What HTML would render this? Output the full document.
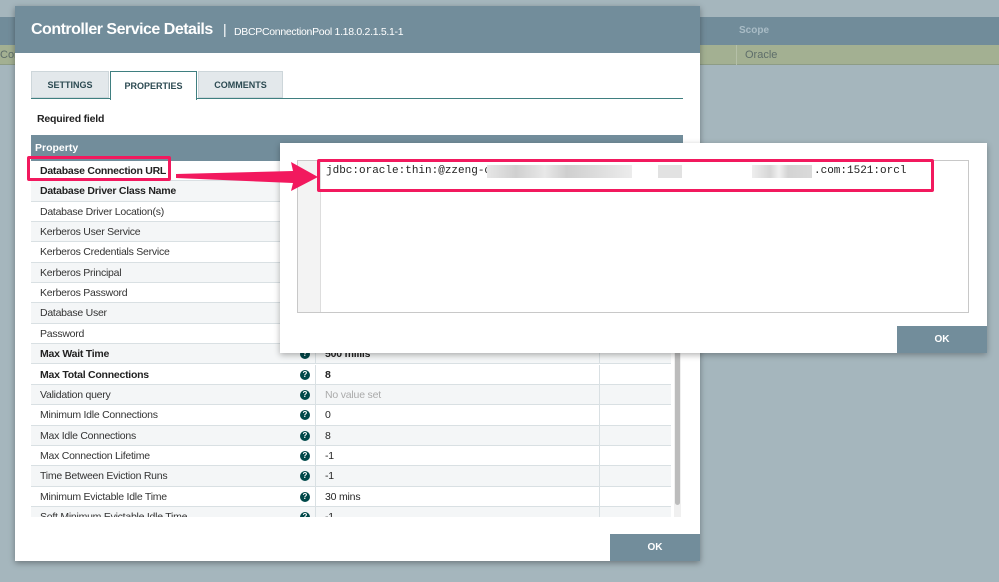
<!DOCTYPE html>
<html><head><meta charset="utf-8"><style>
*{margin:0;padding:0;box-sizing:border-box}
body{width:999px;height:582px;background:#a5b6bd;font-family:"Liberation Sans",sans-serif;position:relative;overflow:hidden;font-size:11px;color:#262626}
.a{position:absolute}
.row{position:absolute;left:31px;width:640px;height:20.35px;border-bottom:1px solid #d9e0e3}
.row .n{position:absolute;left:9px;top:4px;font-size:10.5px;letter-spacing:-0.25px;color:#333;white-space:nowrap}
.row .q{position:absolute;left:269px;top:5px;width:10px;height:10px;border-radius:50%;background:#004849;color:#fff;font-size:8px;font-weight:bold;text-align:center;line-height:10px}
.row .v{position:absolute;left:294px;top:4px;font-size:10.5px;letter-spacing:-0.2px}
.row .c1{position:absolute;left:284px;top:0;bottom:0;border-left:1px solid #d9e0e3}
.row .c2{position:absolute;left:568px;top:0;bottom:0;border-left:1px solid #d9e0e3}
.b{font-weight:bold;color:#222!important}
.btn{position:absolute;background:#728d9b;color:#fff;font-size:10px;font-weight:bold;text-align:center}
</style></head><body>
<div class="a" style="left:0;top:17px;width:999px;height:28px;background:#718c9a"></div>
<div class="a" style="left:739px;top:25px;color:#a9bcc6;font-weight:bold;font-size:10px">Scope</div>
<div class="a" style="left:0;top:45px;width:999px;height:20px;background:#a3b092;border-bottom:1px solid #8d9c85"></div>
<div class="a" style="left:736px;top:45px;height:20px;border-left:1px solid #b5c0a8"></div>
<div class="a" style="left:745px;top:49px;color:#5e6e6a;font-size:11px">Oracle</div>
<div class="a" style="left:0;top:49px;color:#5e6e6a;font-size:11px">Conn</div>

<div class="a" style="left:15px;top:6px;width:685px;height:555px;background:#fff;box-shadow:0 2px 6px rgba(0,0,0,.35)"></div>
<div class="a" style="left:15px;top:6px;width:685px;height:47px;background:#728d9b"></div>
<div class="a" style="left:31px;top:21px;color:#fff;font-weight:bold;font-size:16px;letter-spacing:-0.5px;white-space:nowrap">Controller Service Details</div>
<div class="a" style="left:223px;top:21px;color:#fff;font-size:14px">|</div>
<div class="a" style="left:234px;top:26px;color:#fff;font-size:10.5px;letter-spacing:-0.3px;white-space:nowrap">DBCPConnectionPool 1.18.0.2.1.5.1-1</div>

<div class="a" style="left:31px;top:71px;width:78px;height:27px;background:#e3e8eb;border:1px solid #cdd6da;color:#2c4a52;font-weight:bold;font-size:9px;text-align:center;line-height:26px">SETTINGS</div>
<div class="a" style="left:110px;top:71px;width:87px;height:29px;background:#fff;border:1px solid #3f7f80;border-bottom:none;color:#2c4a52;font-weight:bold;font-size:9px;text-align:center;line-height:28px">PROPERTIES</div>
<div class="a" style="left:198px;top:71px;width:85px;height:27px;background:#e3e8eb;border:1px solid #cdd6da;color:#2c4a52;font-weight:bold;font-size:9px;text-align:center;line-height:26px">COMMENTS</div>
<div class="a" style="left:31px;top:98px;width:79px;height:1px;background:#3f7f80"></div>
<div class="a" style="left:197px;top:98px;width:486px;height:1px;background:#3f7f80"></div>
<div class="a" style="left:37px;top:113px;font-weight:bold;font-size:10.5px;letter-spacing:-0.2px;color:#222">Required field</div>

<div class="a" style="left:31px;top:135px;width:652px;height:26px;background:#728d9b"></div>
<div class="a" style="left:35px;top:142px;color:#fff;font-weight:bold;font-size:10.5px">Property</div>
<div class="a" style="left:31px;top:161px;width:652px;height:356px;overflow:hidden">
<div style="position:relative;left:-31px;top:-161px">
<div class="row" style="top:161px;background:#fff"><span class="n b">Database Connection URL</span><span class="q">?</span><span class="c1"></span><span class="c2"></span></div>
<div class="row" style="top:181.35px;background:#f4f6f7"><span class="n b">Database Driver Class Name</span><span class="q">?</span><span class="c1"></span><span class="c2"></span></div>
<div class="row" style="top:201.7px;background:#fff"><span class="n">Database Driver Location(s)</span><span class="q">?</span><span class="c1"></span><span class="c2"></span></div>
<div class="row" style="top:222.05px;background:#f4f6f7"><span class="n">Kerberos User Service</span><span class="q">?</span><span class="c1"></span><span class="c2"></span></div>
<div class="row" style="top:242.4px;background:#fff"><span class="n">Kerberos Credentials Service</span><span class="q">?</span><span class="c1"></span><span class="c2"></span></div>
<div class="row" style="top:262.75px;background:#f4f6f7"><span class="n">Kerberos Principal</span><span class="q">?</span><span class="c1"></span><span class="c2"></span></div>
<div class="row" style="top:283.1px;background:#fff"><span class="n">Kerberos Password</span><span class="q">?</span><span class="c1"></span><span class="c2"></span></div>
<div class="row" style="top:303.45px;background:#f4f6f7"><span class="n">Database User</span><span class="q">?</span><span class="c1"></span><span class="c2"></span></div>
<div class="row" style="top:323.8px;background:#fff"><span class="n">Password</span><span class="q">?</span><span class="c1"></span><span class="c2"></span></div>
<div class="row" style="top:344.15px;background:#f4f6f7"><span class="n b">Max Wait Time</span><span class="q">?</span><span class="c1"></span><span class="v b">500 millis</span><span class="c2"></span></div>
<div class="row" style="top:364.5px;background:#fff"><span class="n b">Max Total Connections</span><span class="q">?</span><span class="c1"></span><span class="v b">8</span><span class="c2"></span></div>
<div class="row" style="top:384.85px;background:#f4f6f7"><span class="n">Validation query</span><span class="q">?</span><span class="c1"></span><span class="v" style="color:#aaa">No value set</span><span class="c2"></span></div>
<div class="row" style="top:405.2px;background:#fff"><span class="n">Minimum Idle Connections</span><span class="q">?</span><span class="c1"></span><span class="v">0</span><span class="c2"></span></div>
<div class="row" style="top:425.55px;background:#f4f6f7"><span class="n">Max Idle Connections</span><span class="q">?</span><span class="c1"></span><span class="v">8</span><span class="c2"></span></div>
<div class="row" style="top:445.9px;background:#fff"><span class="n">Max Connection Lifetime</span><span class="q">?</span><span class="c1"></span><span class="v">-1</span><span class="c2"></span></div>
<div class="row" style="top:466.25px;background:#f4f6f7"><span class="n">Time Between Eviction Runs</span><span class="q">?</span><span class="c1"></span><span class="v">-1</span><span class="c2"></span></div>
<div class="row" style="top:486.6px;background:#fff"><span class="n">Minimum Evictable Idle Time</span><span class="q">?</span><span class="c1"></span><span class="v">30 mins</span><span class="c2"></span></div>
<div class="row" style="top:506.95px;background:#f4f6f7"><span class="n">Soft Minimum Evictable Idle Time</span><span class="q">?</span><span class="c1"></span><span class="v">-1</span><span class="c2"></span></div>
</div></div>
<div class="a" style="left:674px;top:161px;width:7px;height:356px;background:#f0f0f0"></div>
<div class="a" style="left:675px;top:340px;width:5px;height:165px;background:#bcbcbc;border-radius:3px"></div>
<div class="btn" style="left:610px;top:534px;width:90px;height:27px;line-height:27px">OK</div>

<div class="a" style="left:280px;top:143px;width:707px;height:210px;background:#fff;box-shadow:0 2px 6px rgba(0,0,0,.3)"></div>
<div class="a" style="left:297px;top:160px;width:672px;height:153px;border:1px solid #c8c8c8;background:#fff"></div>
<div class="a" style="left:298px;top:161px;width:23px;height:151px;background:#f3f3f3;border-right:1px solid #ddd"></div>
<div class="a" style="left:326px;top:165px;font-family:'Liberation Mono',monospace;font-size:11px;color:#222">jdbc:oracle:thin:@zzeng-c</div>
<div class="a" style="left:487px;top:165px;width:145px;height:13px;background:linear-gradient(90deg,#e6e6e6,#d0d0d0 20%,#e8e8e8 40%,#cfcfcf 55%,#dcdcdc 75%,#ececec)"></div>
<div class="a" style="left:658px;top:165px;width:24px;height:13px;background:#e2e2e2"></div>
<div class="a" style="left:752px;top:165px;width:60px;height:13px;background:linear-gradient(90deg,#eee,#d6d6d6 30%,#f0f0f0 45%,#d3d3d3 60%,#dadada)"></div>
<div class="a" style="left:814px;top:165px;font-family:'Liberation Mono',monospace;font-size:11px;color:#222">.com:1521:orcl</div>
<div class="btn" style="left:897px;top:326px;width:90px;height:27px;line-height:27px">OK</div>

<div class="a" style="left:27px;top:156px;width:144px;height:25px;border:3px solid #f2195e;border-radius:2px"></div>
<div class="a" style="left:317px;top:159px;width:617px;height:33px;border:3px solid #f2195e;border-radius:2px"></div>
<svg class="a" style="left:0;top:0" width="999" height="582"><polygon points="176,174 293,171 291,162 318,177 291,191 293,183 176,178" fill="#f2195e"/></svg>
</body></html>
